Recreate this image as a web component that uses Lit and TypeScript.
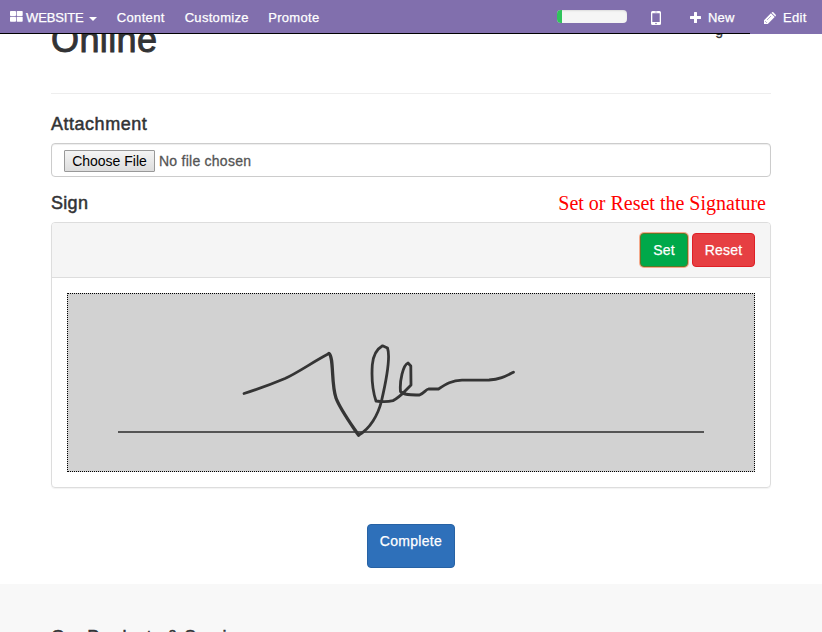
import { LitElement, html, css, svg } from "lit";
import { customElement } from "lit/decorators.js";

const STROKES: [string, number][] = [
  ["M244 393.5 Q266 386.5 285 378.5 C299 372 311 363 329 353.5", 2.7],
  ["M329 353.5 C334 357 331 384 336 398 C340 409 351 424 358.5 435.2", 3.3],
  ["M358.5 435.2 C370 429 378 415 381.5 401 C385 386 391 358 387.5 348 L382.5 345.8 C377 349 373 356 372.3 365 C371.5 377 373 392 376 401 C380 401.5 388 401.8 393 400.6 C400 397.5 404 392 411 385 L410.8 366 L408 363 C403 365 399.5 381 400.5 391.5 C404 395.5 412 395 419.5 395 C424 393 426 389.5 428.5 389 L438.5 389 C446 384 452 380.3 462 380.2 L489 380 C500 379.5 506 376 513.5 372.2", 2.8],
];

@customElement("app-root")
export class AppRoot extends LitElement {
  static styles = css`
    * { box-sizing: border-box; }
    :host {
      display: flex;
      flex-direction: column;
      height: 632px;
      overflow: hidden;
      background: #fff;
      color: #323335;
      font: 14px/20px "Liberation Sans", Arial, sans-serif;
    }
    nav {
      height: 34px;
      flex: none;
      display: flex;
      align-items: center;
      padding: 0 15px 0 10px;
      color: #fff;
      font-size: 13px;
      background: linear-gradient(#000, #000) 0 33px / 750px 1px no-repeat #816fad;
      position: relative;
      z-index: 1;
    }
    nav span { -webkit-text-stroke: 0.25px currentColor; white-space: nowrap; padding-top: 2px; }
    svg { display: block; flex: none; }
    .grid { margin-right: 3px; margin-top: -1px; }
    .brand { letter-spacing: -0.12px; }
    .caret { margin: 3px 20px 0 5px; }
    .content { width: 68px; letter-spacing: 0.37px; }
    .customize { width: 83.5px; letter-spacing: 0.3px; }
    .promote { letter-spacing: 0.32px; }
    .meter {
      margin-left: auto;
      width: 70px;
      height: 13px;
      border-radius: 4px;
      overflow: hidden;
      background: #f5f5f5;
      box-shadow: inset 0 1px 2px rgba(0, 0, 0, 0.1);
      margin-top: -1px;
      margin-right: 24px;
    }
    .fill { width: 5px; height: 13px; background: #30c35c; }
    .phone { margin-right: 29px; margin-top: 2px; }
    .plus { margin-right: 7px; }
    .new { width: 56px; letter-spacing: 0.15px; }
    .pencil { margin-right: 7px; margin-top: 1px; }
    .edit { width: 24px; letter-spacing: 0.3px; }
    main { width: 720px; margin: 0 auto; height: 550px; flex: none; display: flex; flex-direction: column; }
    .top { height: 60px; border-bottom: 1px solid #eee; display: flex; justify-content: space-between; }
    h1 { font-size: 36px; font-weight: 400; line-height: 40px; margin: -14px 0 0; letter-spacing: 0.4px; -webkit-text-stroke: 0.9px currentColor; }
    .link { font-size: 14px; line-height: 16px; margin: -12px 48px 0 0; -webkit-text-stroke: 0.3px currentColor; }
    h4 { font-size: 18px; font-weight: 400; line-height: 20px; margin: 0; -webkit-text-stroke: 0.5px currentColor; letter-spacing: 0.52px; }
    .attachment { margin-top: 20px; }
    .file {
      height: 34px;
      margin-top: 9px;
      border: 1px solid #ccc;
      border-radius: 4px;
      box-shadow: inset 0 1px 1px rgba(0, 0, 0, 0.075);
      padding: 6px 12px;
      display: flex;
      color: #555;
    }
    .choose {
      width: 91px;
      height: 22px;
      border: 1px solid #999;
      border-radius: 1px;
      background: linear-gradient(#f4f4f4, #ddd);
      color: #000;
      font: 14px/20px "Liberation Sans", Arial, sans-serif;
      padding: 0;
      margin-right: 4px;
    }
    .none { line-height: 22px; letter-spacing: 0.25px; -webkit-text-stroke: 0.3px currentColor; }
    .signrow { margin-top: 16px; height: 20px; display: flex; justify-content: space-between; }
    .signrow h4 { letter-spacing: 0.3px; }
    .note { color: #f00; font: 20px/20px "Liberation Serif", "Times New Roman", serif; margin-right: 5px; white-space: nowrap; }
    .panel { margin-top: 9px; height: 266px; border: 1px solid #ddd; border-radius: 4px; box-shadow: 0 1px 1px rgba(0, 0, 0, 0.05); }
    .head { height: 55px; background: #f5f5f5; border-bottom: 1px solid #ddd; border-radius: 3px 3px 0 0; display: flex; justify-content: flex-end; gap: 4px; padding: 10px 15px; }
    .btn { font: 14px/32px "Liberation Sans", Arial, sans-serif; height: 34px; color: #fff; border: 1px solid; border-radius: 4px; padding: 0; -webkit-text-stroke: 0.25px currentColor; letter-spacing: 0.2px; }
    .set { width: 48px; background: #00a94a; border-color: #5f7827; box-shadow: 0 0 0 1px #f5aa8c; }
    .reset { width: 63px; background: #e63f42; border-color: #df1f26; }
    .pad { margin: 15px; width: 688px; height: 179px; background: #d2d2d2; border: 1px dotted #000; }
    .complete { width: 88px; height: 44px; background: #2e70ba; border-color: #2762a4; align-self: center; margin-top: 36px; padding-bottom: 10px; letter-spacing: 0.3px; }
    footer { flex: 1; background: #f8f8f8; padding: 43px 51px 0; }
    footer h4 { letter-spacing: 0.34px; }
  `;

  render() {
    return html`
      <nav>
        <svg class="grid" width="13" height="11" viewBox="0 0 13 11" fill="#fff">
          <rect width="6" height="5" rx=".7" /><rect x="6.7" width="6" height="5" rx=".7" />
          <rect y="5.7" width="6" height="5" rx=".7" /><rect x="6.7" y="5.7" width="6" height="5" rx=".7" />
        </svg>
        <span class="brand">WEBSITE</span>
        <svg class="caret" width="8" height="4" viewBox="0 0 8 4" fill="#fff"><path d="M0 0H8L4 4Z" /></svg>
        <span class="content">Content</span>
        <span class="customize">Customize</span>
        <span class="promote">Promote</span>
        <div class="meter"><div class="fill"></div></div>
        <svg class="phone" width="10" height="14" viewBox="0 0 10 14">
          <path fill="#fff" fill-rule="evenodd" d="M1.5 0H8.5Q10 0 10 1.5V12.5Q10 14 8.5 14H1.5Q0 14 0 12.5V1.5Q0 0 1.5 0ZM1.3 2.3V11H8.7V2.3ZM3.7 .8V1.3H6.3V.8ZM5 11.7A.8.8 0 1 0 5 13.3A.8.8 0 1 0 5 11.7Z" />
        </svg>
        <svg class="plus" width="11" height="11" viewBox="0 0 11 11"><path fill="#fff" d="M4.6 0H6.4Q7 0 7 .6V4H10.4Q11 4 11 4.6V6.4Q11 7 10.4 7H7V10.4Q7 11 6.4 11H4.6Q4 11 4 10.4V7H.6Q0 7 0 6.4V4.6Q0 4 .6 4H4V.6Q4 0 4.6 0Z" /></svg>
        <span class="new">New</span>
        <svg class="pencil" width="12" height="12" viewBox="0 0 12 12">
          <path fill="#fff" d="M0 12V8.2L6.9 1.3L10.7 5.1L3.8 12ZM7.5 .7L8.1 .3Q8.7 -.2 9.3 .3L11.7 2.7Q12.2 3.3 11.7 3.9L11.3 4.5Z" />
          <path d="M1.1 9.1L2.9 10.9M3 8L7 4" stroke="#816fad" stroke-width=".6" />
        </svg>
        <span class="edit">Edit</span>
      </nav>
      <main>
        <div class="top"><h1>Online</h1><span class="link">g</span></div>
        <h4 class="attachment">Attachment</h4>
        <div class="file"><button class="choose">Choose File</button><span class="none">No file chosen</span></div>
        <div class="signrow"><h4>Sign</h4><span class="note">Set or Reset the Signature</span></div>
        <section class="panel">
          <div class="head"><button class="btn set">Set</button><button class="btn reset">Reset</button></div>
          <div class="pad">
            <svg width="686" height="177" viewBox="68 294 686 177" fill="none" stroke-linecap="round" stroke-linejoin="round">
              <path d="M118 432H704" stroke="#555" stroke-width="2" stroke-linecap="butt" />
              ${STROKES.map(([d, w]) => svg`<path d=${d} stroke="#353535" stroke-width=${w} />`)}
            </svg>
          </div>
        </section>
        <button class="btn complete">Complete</button>
      </main>
      <footer><h4>Our Products &amp; Services</h4></footer>
    `;
  }
}
